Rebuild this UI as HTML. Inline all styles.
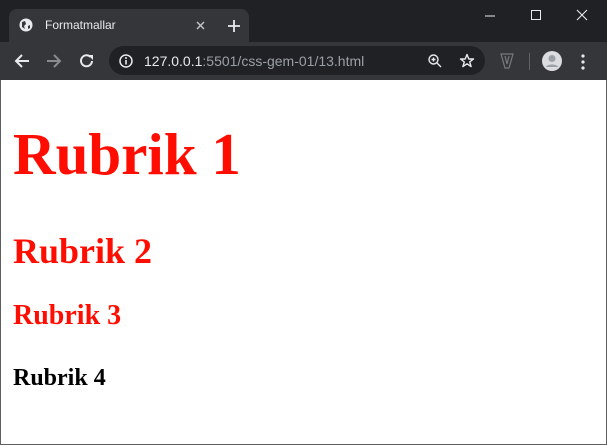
<!DOCTYPE html>
<html><head><meta charset="utf-8"><style>
*{margin:0;padding:0;box-sizing:border-box}
body{width:607px;height:445px;overflow:hidden;background:#fff;position:relative;font-family:"Liberation Sans",sans-serif}
.top{position:absolute;left:0;top:0;width:607px;height:43px;background:#202124}
.tab{position:absolute;left:9px;top:9px;width:240px;height:34px;background:#35363a;border-radius:8px 8px 0 0}
.tb{position:absolute;left:0;top:42px;width:607px;height:38px;background:#35363a}
.omni{position:absolute;left:109px;top:46px;width:376px;height:29px;background:#202124;border-radius:15px}
.t{position:absolute;color:#e8eaed}
.frame{position:absolute;left:0;top:80px;width:607px;height:365px;border:1px solid #5f5f5f;border-top:none}
.h{position:absolute;left:13px;font-family:"Liberation Serif",serif;font-weight:bold;white-space:nowrap}
</style></head><body>
<div class="top"></div>
<div class="tab"></div>
<svg style="position:absolute;left:19px;top:18px" width="14" height="14" viewBox="0 0 14 14"><circle cx="7" cy="7" r="6.5" fill="#e8eaed"/><path d="M3 4 L6 3 L7 6 L5 8 L6 11 L3 9Z M9 8 L11 7 L11 10 L9 11Z" fill="#35363a"/></svg>
<div class="t" style="left:45px;top:18px;font-size:12px">Formatmallar</div>
<svg style="position:absolute;left:196px;top:21px" width="9" height="9"><path d="M1 1L8 8M8 1L1 8" stroke="#bdc1c6" stroke-width="1.5"/></svg>
<svg style="position:absolute;left:228px;top:20px" width="12" height="12"><path d="M6 0V12M0 6H12" stroke="#e8eaed" stroke-width="1.8"/></svg>
<svg style="position:absolute;left:485px;top:15px" width="10" height="2"><path d="M0 1H10" stroke="#e8eaed"/></svg>
<svg style="position:absolute;left:531px;top:10px" width="11" height="11"><rect x=".5" y=".5" width="9" height="9" fill="none" stroke="#e8eaed"/></svg>
<svg style="position:absolute;left:576px;top:9px" width="12" height="12"><path d="M1 1L11 11M11 1L1 11" stroke="#e8eaed" stroke-width="1.1"/></svg>
<div class="tb"></div>
<svg style="position:absolute;left:14px;top:53px" width="16" height="16"><path d="M15 8H2M8 2L2 8L8 14" stroke="#e8eaed" stroke-width="2" fill="none"/></svg>
<svg style="position:absolute;left:46px;top:53px" width="16" height="16"><path d="M1 8H14M8 2L14 8L8 14" stroke="#8a8b8d" stroke-width="2" fill="none"/></svg>
<svg style="position:absolute;left:79px;top:53px" width="16" height="16"><path d="M13 8A5.5 5.5 0 1 1 11.5 4" stroke="#e8eaed" stroke-width="2" fill="none"/><path d="M9 2H14V7Z" fill="#e8eaed"/></svg>
<div class="omni"></div>
<svg style="position:absolute;left:119px;top:54px" width="14" height="14"><circle cx="7" cy="7" r="6" stroke="#e8eaed" stroke-width="1.5" fill="none"/><path d="M7 6V10.5" stroke="#e8eaed" stroke-width="1.6"/><circle cx="7" cy="4" r="1" fill="#e8eaed"/></svg>
<div class="t" style="left:144px;top:53px;font-size:14px;color:#9aa0a6"><span style="color:#e8eaed">127.0.0.1</span>:5501/css-gem-01/13.html</div>
<svg style="position:absolute;left:427px;top:53px" width="16" height="16"><circle cx="6.5" cy="6.5" r="4.5" stroke="#e8eaed" stroke-width="1.4" fill="none"/><path d="M10 10L14 14M4.5 6.5H8.5M6.5 4.5V8.5" stroke="#e8eaed" stroke-width="1.4"/></svg>
<svg style="position:absolute;left:459px;top:53px" width="16" height="16"><path d="M8 1.5L9.8 6H14.5L10.7 8.9L12.1 13.6L8 10.8L3.9 13.6L5.3 8.9L1.5 6H6.2Z" stroke="#e8eaed" stroke-width="1.4" fill="none" stroke-linejoin="round"/></svg>
<svg style="position:absolute;left:500px;top:53px" width="14" height="16"><path d="M1 1H13L9 15H5Z M5 3L7 11L9 3" stroke="#77797c" stroke-width="1.2" fill="none"/></svg>
<div style="position:absolute;left:529px;top:53px;width:1px;height:17px;background:#5f6368"></div>
<svg style="position:absolute;left:542px;top:51px" width="20" height="20"><circle cx="10" cy="10" r="10" fill="#dadce0"/><circle cx="10" cy="7.5" r="3.5" fill="#9aa0a6"/><path d="M3.5 16A8 6 0 0 1 16.5 16" fill="#9aa0a6"/></svg>
<svg style="position:absolute;left:581px;top:54px" width="4" height="16"><circle cx="2" cy="2" r="1.6" fill="#e8eaed"/><circle cx="2" cy="8" r="1.6" fill="#e8eaed"/><circle cx="2" cy="14" r="1.6" fill="#e8eaed"/></svg>
<div class="frame"></div>
<div class="h" style="top:125px;font-size:59px;line-height:59px;color:#ff0d00">Rubrik 1</div>
<div class="h" style="top:233px;font-size:36px;line-height:36px;color:#ff0d00">Rubrik 2</div>
<div class="h" style="top:302px;font-size:28px;line-height:28px;color:#ff0d00">Rubrik 3</div>
<div class="h" style="top:366px;font-size:24px;line-height:24px;color:#000">Rubrik 4</div>
</body></html>
